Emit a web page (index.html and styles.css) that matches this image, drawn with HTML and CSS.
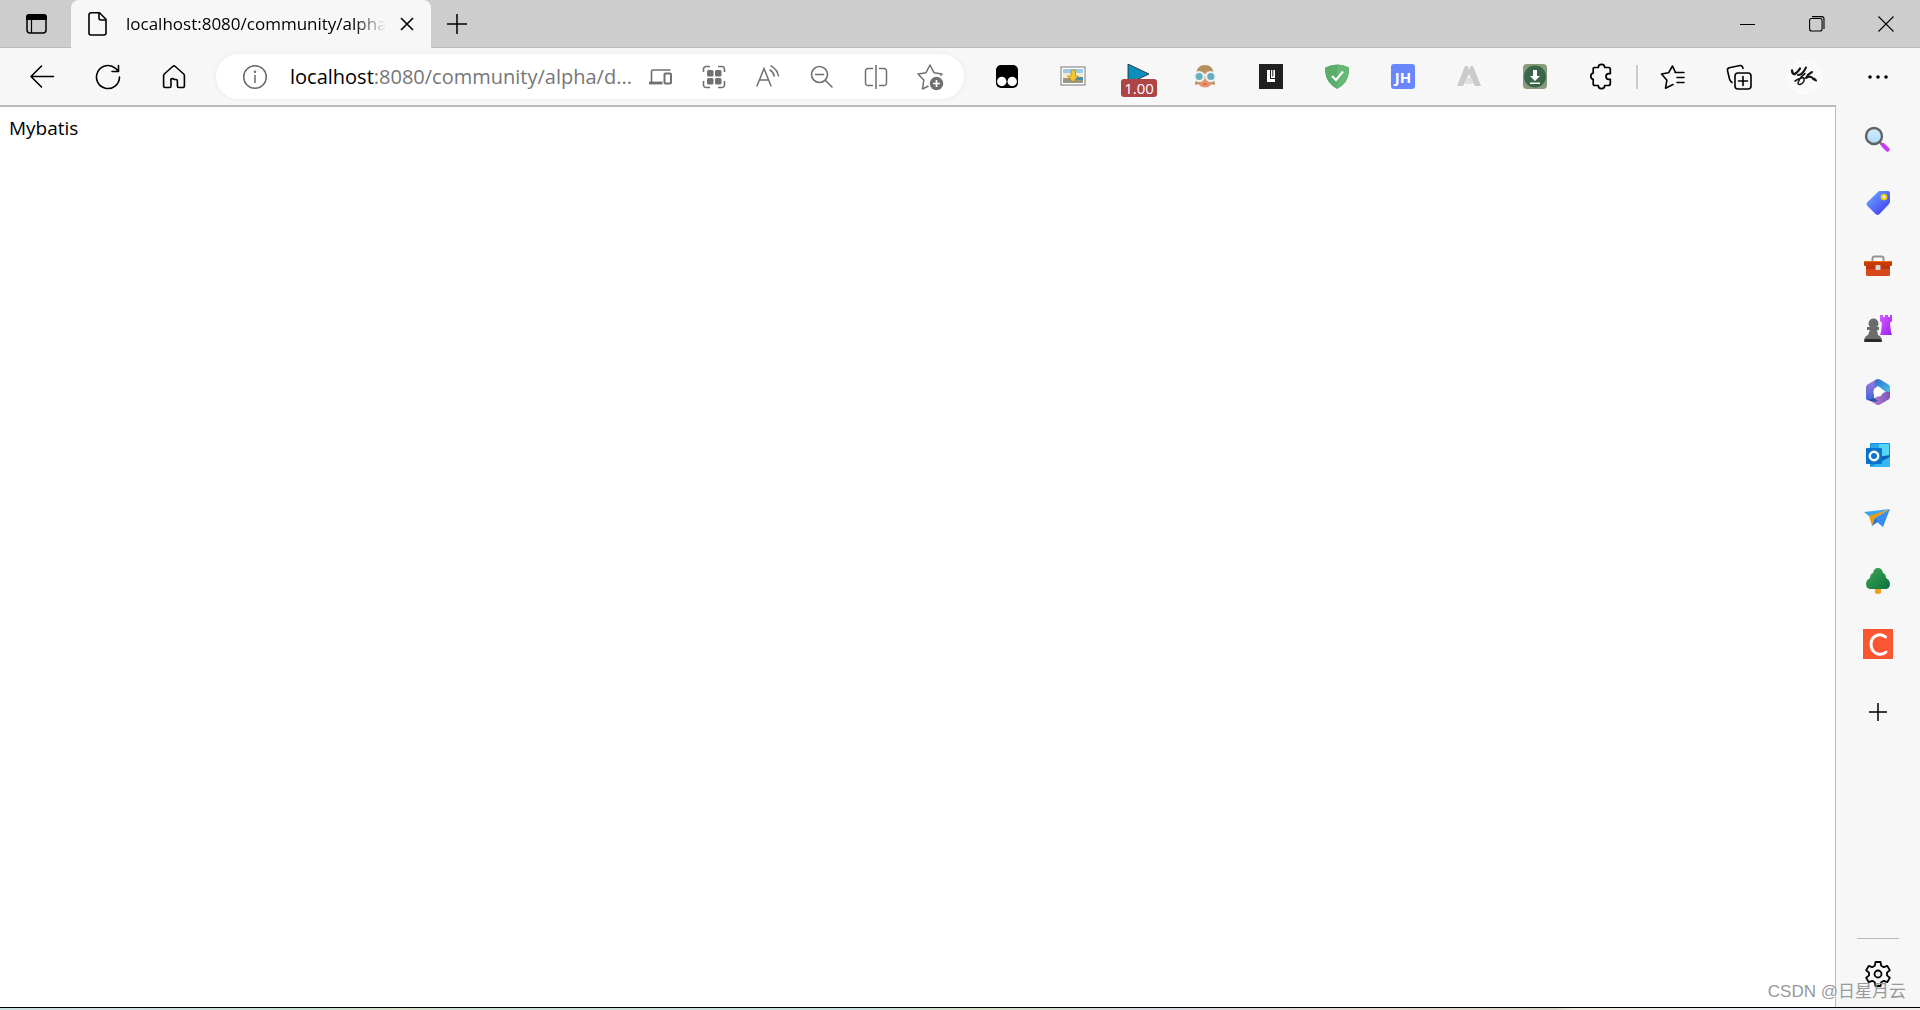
FILE: index.html
```html
<!DOCTYPE html>
<html lang="en">
<head>
<meta charset="utf-8">
<title>localhost:8080/community/alpha</title>
<link rel="stylesheet" href="styles.css">
</head>
<body>
<div class="browser">
  <header class="tabstrip">
    <button class="tab-menu" aria-label="Tab actions"><svg width="24" height="24" viewBox="0 0 24 24"><rect x="3" y="3" width="19" height="18" rx="3" fill="none" stroke="#000" stroke-width="1.5"/><path d="M2 8V5a3 3 0 0 1 3-3h15a3 3 0 0 1 3 3v3z"/><path d="M7.500 8v13" stroke="#000" stroke-width="1.200"/></svg></button>
    <div class="tab">
      <svg width="22" height="26" viewBox="0 0 22 26" fill="none" stroke="#000" stroke-width="1.6" stroke-linejoin="round"><path d="M4 1.800h8.500l6.500 6.500v13.700a2 2 0 0 1-2 2H4a2 2 0 0 1-2-2V3.800a2 2 0 0 1 2-2z"/><path d="M12 2v5a2 2 0 0 0 2 2h5"/></svg>
      <span class="tab-title">localhost:8080/community/alpha</span>
      <button class="tab-close" aria-label="Close tab"><svg width="14" height="14" viewBox="0 0 14 14"><path d="M1 1l12 12M13 1L1 13" stroke="#000" stroke-width="1.600"/></svg></button>
    </div>
    <button class="new-tab" aria-label="New tab"><svg width="22" height="22" viewBox="0 0 22 22"><path d="M11 1v20M1 11h20" stroke="#000" stroke-width="1.500"/></svg></button>
    <div class="window-controls">
      <button aria-label="Minimize"><svg width="16" height="16" viewBox="0 0 16 16"><path d="M0 8.500h15" stroke="#000"/></svg></button>
      <button aria-label="Restore"><svg width="16" height="16" viewBox="0 0 16 16" fill="none" stroke="#000" stroke-width="1.100"><rect x=".6" y="2.500" width="12.500" height="12.500" rx="2"/><path d="M3 .6h9.500a2.500 2.500 0 0 1 2.500 2.500V13"/></svg></button>
      <button aria-label="Close"><svg width="16" height="16" viewBox="0 0 16 16"><path d="M.5.5l15 15M15.500.5l-15 15" stroke="#000" stroke-width="1.100"/></svg></button>
    </div>
  </header>

  <nav class="toolbar">
    <div class="group">
      <button aria-label="Back"><svg width="26" height="26" viewBox="0 0 26 26" fill="none" stroke="#000" stroke-width="1.600" stroke-linecap="round" stroke-linejoin="round"><path d="M24.500 12.500H2M12.500 2L2 12.500 12.500 23"/></svg></button>
      <button aria-label="Refresh"><svg width="26" height="26" viewBox="0 0 26 26" fill="none" stroke="#000" stroke-width="1.600" stroke-linecap="round" stroke-linejoin="round"><path d="M24.500 13A11.500 11.500 0 1 1 20.500 4.300l3 3.200M23.500 1.500v6h-6.500"/></svg></button>
      <button aria-label="Home"><svg width="26" height="26" viewBox="0 0 26 26" fill="none" stroke="#000" stroke-width="1.600" stroke-linejoin="round"><path d="M11.700 2.500a2 2 0 0 1 2.600 0l8.400 7.500a2 2 0 0 1 .7 1.500V22a1.500 1.500 0 0 1-1.500 1.500h-4a1.500 1.500 0 0 1-1.500-1.500v-5a1.500 1.500 0 0 0-1.500-1.500h-2A1.500 1.500 0 0 0 10 17v5a1.500 1.500 0 0 1-1.500 1.500H4.100A1.500 1.500 0 0 1 2.600 22V11.500a2 2 0 0 1 .7-1.500z"/></svg></button>
    </div>
    <div class="address">
      <button class="site-info" aria-label="Site information"><svg width="26" height="26" viewBox="0 0 26 26" fill="none" stroke="#6a6a6a" stroke-width="1.500"><circle cx="13" cy="13" r="11.300"/><path d="M13 11v8"/><circle cx="13" cy="7.800" r=".5"/></svg></button>
      <a class="url" href="#"><span class="host">localhost</span>:8080/community/alpha/d...</a>
      <div class="address-actions">
        <button aria-label="Send to device"><svg width="26" height="26" viewBox="0 0 26 26" fill="none" stroke="#707070" stroke-width="1.600"><path d="M23.500 6H6a1.500 1.500 0 0 0-1.500 1.500V18"/><path d="M2 19h13.500" stroke-width="2.800"/><rect x="17.500" y="9.500" width="6.500" height="10" rx="1" stroke-width="2"/></svg></button>
        <button aria-label="QR code"><svg width="26" height="26" viewBox="0 0 26 26" fill="none" stroke="#707070" stroke-width="1.600"><path d="M2.500 8V5a2.500 2.500 0 0 1 2.500-2.500h4M17 2.500h4A2.500 2.500 0 0 1 23.500 5v3M23.500 17v4a2.500 2.500 0 0 1-2.500 2.500h-4M9 23.500H5A2.500 2.500 0 0 1 2.500 21v-4"/><g fill="#707070" stroke="none"><rect x="6" y="6" width="6.500" height="6.500" rx="1.500"/><rect x="14" y="6" width="6.500" height="6.500" rx="1.500"/><rect x="6" y="14" width="6.500" height="6.500" rx="1.500"/><rect x="14" y="14" width="6.500" height="6.500" rx="1.500"/></g></svg></button>
        <button aria-label="Read aloud"><svg width="26" height="26" viewBox="0 0 26 26" fill="none" stroke="#707070" stroke-width="1.500" stroke-linecap="round"><path d="M2 22L9 4.500 16 22M4.500 16h9M16 1.800q6 3.200 7.500 10M15 6q3.500 2 4.200 6"/></svg></button>
        <button aria-label="Zoom out"><svg width="26" height="26" viewBox="0 0 26 26" fill="none" stroke="#707070" stroke-width="1.600" stroke-linecap="round"><circle cx="10.500" cy="10.500" r="8"/><path d="M16.500 16.500l6.500 6.500M6.500 10.500h8"/></svg></button>
        <button aria-label="Split screen"><svg width="26" height="26" viewBox="0 0 26 26" fill="none" stroke="#707070" stroke-width="1.500"><path d="M10 4.500H5A2.500 2.500 0 0 0 2.500 7v12A2.500 2.500 0 0 0 5 21.500h5M16 4.500h5A2.500 2.500 0 0 1 23.500 7v12a2.500 2.500 0 0 1-2.500 2.500h-5M13 1v24"/></svg></button>
        <button aria-label="Add to favorites"><svg width="28" height="28" viewBox="0 0 28 28" fill="none" stroke="#707070" stroke-width="1.500" stroke-linejoin="round"><path d="M12.500 23L6.500 26l1.300-9L2 11l8-1.300L14 2l4 7.700 8 1.300-1.500 1.800"/><circle cx="20.500" cy="20.500" r="6.700" fill="#707070" stroke="none"/><path d="M20.500 17v7M17 20.500h7" stroke="#fff" stroke-width="1.700"/></svg></button>
      </div>
    </div>
    <div class="group extensions">
      <button aria-label="Tampermonkey"><svg width="24" height="24" viewBox="0 0 24 24"><rect x="1" y="1" width="22" height="23" rx="5"/><circle cx="6.800" cy="17.500" r="4.700" fill="#fff"/><circle cx="17.200" cy="17.500" r="4.700" fill="#fff"/></svg></button>
      <button aria-label="Image downloader"><svg width="26" height="22" viewBox="0 0 26 22"><rect x="1" y="2" width="24" height="18" fill="#fff" stroke="#777"/><path fill="#9cc9ee" d="M3 4h20v9H3z"/><path fill="#f3ecc9" d="M3 8h20v5H3z"/><path fill="#9b9882" d="M3 13h20v5H3z"/><path fill="#4b8bad" d="M14 12h9v3h-9z"/><path fill="#f4c52b" stroke="#a67b1c" stroke-width=".6" d="M11 5h4.500v6h3L13 17l-5.500-6H11z"/></svg></button>
      <button class="speed" aria-label="Playback speed 1.00"><svg width="24" height="24" viewBox="0 0 24 24"><path d="M1 0l21 10L1 20z" fill="#0b8ebc" stroke="#222" stroke-width=".8"/></svg><span class="badge">1.00</span></button>
      <button aria-label="Profile reader"><svg width="24" height="24" viewBox="0 0 24 24"><path d="M2 21q1-5 1-11Q4 1 12 1t9 9q0 6 1 11l-4-1H6z" fill="#b5905f"/><path d="M4 11q8-1 10-5l6 6v5q-2 6.500-8 6.500T4 17z" fill="#e59470"/><g fill="#69aeb8" stroke="#e7f5fa" stroke-width="2"><path d="M0 11h24" /><circle cx="6.200" cy="12.500" r="4.600"/><circle cx="17.800" cy="12.500" r="4.600"/></g><path d="M10 20h4" stroke="#ca4e47"/></svg></button>
      <button aria-label="LeetCode tools"><svg width="24" height="25" viewBox="0 0 24 25"><path fill="#202020" d="M0 0h24v25H0z"/><path fill="#fff" d="M8 6h3v9h5v3H8zM12 6h4v8h-4z"/><path fill="#202020" d="M13.300 6h1v6.500h-1z"/></svg></button>
      <button aria-label="Ad blocker"><svg width="24" height="25" viewBox="0 0 24 25"><path d="M0 3.500Q6 .5 12 .5t12 3Q25 18 12 25-1 18 0 3.500z" fill="#5bad6c"/><path d="M12 .5q6 0 12 3Q25 18 12 25z" fill="#65b875"/><path d="M7 12l4 4 7-8.500" fill="none" stroke="#fff" stroke-width="2"/></svg></button>
      <button class="jh" aria-label="JH extension">JH</button>
      <button aria-label="Mirror extension"><svg width="26" height="22" viewBox="0 0 26 22"><path fill="#cbcbcb" d="M9 1h2.500L13 5l1.500-4H17l8 20h-6L13 9 7 21H1z"/><path fill="#e0e0e0" d="M11 13h4l2.500 6H8.500z"/></svg></button>
      <button aria-label="Downloader"><svg width="24" height="25" viewBox="0 0 24 25"><rect width="24" height="25" rx="4" fill="#869b7a"/><circle cx="12" cy="12.500" r="11" fill="#3b6548"/><path fill="#fff" d="M10 6h4v6h3l-5 5-5-5h3zM7 18.500h10v1.600H7z"/></svg></button>
      <button aria-label="Extensions"><svg width="26" height="28" viewBox="0 0 26 28" fill="none" stroke="#000" stroke-width="1.700" stroke-linejoin="round"><path d="M6.500 5.500h3.800a3.200 3.200 0 0 1 6.400 0h3.800a1.800 1.800 0 0 1 1.800 1.800v4.400h-1.500a2.800 2.800 0 0 0 0 5.600h1.500v4.200a2 2 0 0 1-2 2h-3.600a3.200 3.200 0 0 1-6.400 0H7a1.800 1.800 0 0 1-1.800-1.800v-4.400a3.200 3.200 0 0 1 0-6.200V6.800a1.300 1.300 0 0 1 1.300-1.300z"/></svg></button>
    </div>
    <span class="divider"></span>
    <div class="group">
      <button aria-label="Favorites"><svg width="26" height="26" viewBox="0 0 26 26" fill="none" stroke="#000" stroke-width="1.600" stroke-linecap="round" stroke-linejoin="round"><path d="M15 8.500h9M17 13.500h7M17 18.500h7M13 20.500l-7.500 3.700 1.400-8L1.500 10l7-1.200L12.500 2l3 6.500"/></svg></button>
      <button aria-label="Collections"><svg width="26" height="26" viewBox="0 0 26 26" fill="none" stroke="#000" stroke-width="1.600" stroke-linecap="round"><path d="M6 18.500Q4 17 3.500 15L1.500 6.500A2.500 2.500 0 0 1 3.200 3.700L14 1.500q2.500-.2 3 3"/><rect x="9" y="9" width="16" height="16" rx="3"/><path d="M17 12.500v9M12.500 17h9"/></svg></button>
      <button aria-label="Profile"><svg width="34" height="34" viewBox="0 0 34 34" fill="none" stroke="#151515" stroke-linecap="round" stroke-linejoin="round"><circle cx="17" cy="17" r="16.500" fill="#fafafa" stroke="#fff"/><path d="M4 10.500q.5 4 3 3.500 3-2 5-5.500" stroke-width="2.400"/><path d="M10 15q4 .5 8-7.500" stroke-width="2"/><path d="M7 21q7-4 9-3 1 5-4 6.500-3 0-1.500-3 2-5 6.500-8" stroke-width="1.600"/><path d="M24 12q-4 2-6 6 4-2 6-.5 1 2.500 4 3l-2-2" stroke-width="2"/></svg></button>
    </div>
    <button class="more" aria-label="Settings and more"><svg width="22" height="6" viewBox="0 0 22 6"><circle cx="3" cy="3" r="1.800"/><circle cx="11" cy="3" r="1.800"/><circle cx="19" cy="3" r="1.800"/></svg></button>
  </nav>

  <div class="body">
    <main class="page">Mybatis</main>
    <aside class="sidebar">
      <button aria-label="Search"><svg width="28" height="28" viewBox="0 0 28 28"><defs><linearGradient id="purple" x2="1" y2="1"><stop stop-color="#d75bff"/><stop offset="1" stop-color="#9c20f4"/></linearGradient><linearGradient id="glass" x2="0" y2="1"><stop stop-color="#d6efff"/><stop offset="1" stop-color="#a9d9fb"/></linearGradient></defs><path d="M16 16.500l3 3" stroke="#777" stroke-width="2.500"/><circle cx="10" cy="10" r="8" fill="url(#glass)" stroke="#636363" stroke-width="2.400"/><path d="M19.500 19.500l4 4" stroke="#c63cfa" stroke-width="4.500" stroke-linecap="round"/></svg></button>
      <button aria-label="Shopping"><svg width="28" height="28" viewBox="0 0 28 28"><defs><linearGradient id="tag" x2="1" y2="1"><stop stop-color="#6fb4ff"/><stop offset="1" stop-color="#3c2df0"/></linearGradient></defs><path d="M15 2h9a2 2 0 0 1 2 2v8q0 2-1.500 3.500l-9 9.500q-2 2-4 0l-8-8q-2-2 0-4z" fill="url(#tag)"/><circle cx="20" cy="8" r="2.400" fill="#e4efe0" stroke="#f3c911" stroke-width="1.900"/></svg></button>
      <button aria-label="Tools"><svg width="28" height="28" viewBox="0 0 28 28"><path d="M8.500 10V6.500a2 2 0 0 1 2-2h7a2 2 0 0 1 2 2V10" fill="none" stroke="#949494" stroke-width="2"/><rect x="2" y="12" width="24" height="12" rx="1.500" fill="#d9481a"/><path fill="#bd360d" d="M2 13h24v4H2z"/><rect x="0" y="9" width="28" height="5" rx="1" fill="#c73b04"/><path d="M0 9.500h28" stroke="#ed6810"/><rect x="11.500" y="13" width="5" height="5" rx="1" fill="#d5d5d5"/></svg></button>
      <button aria-label="Games"><svg width="28" height="28" viewBox="0 0 28 28"><path fill="url(#purple)" d="M16 0h3v2h2V0h3v2h2V0h2v6l-2 2 1 9 1 3H16l1-3 1-9-2-2z"/><path fill="#6b6b6b" d="M6 12a5 5 0 1 1 7 0h2v3h-2l1 5q3 1 4 5v2H0v-2q1-4 4-5l2-5H3v-3z"/><path d="M2 25.500h14" stroke="#292929" stroke-width="3" stroke-linecap="round"/></svg></button>
      <button aria-label="Microsoft 365"><svg width="28" height="28" viewBox="0 0 28 28"><defs><linearGradient id="m1" x2="0" y2="1"><stop stop-color="#a577dd"/><stop offset="1" stop-color="#3a6bdc"/></linearGradient><linearGradient id="m2" x2="1" y2="1"><stop stop-color="#2d6bca"/><stop offset="1" stop-color="#4cc8ee"/></linearGradient><linearGradient id="m3" x2="1"><stop stop-color="#c58bdd"/><stop offset="1" stop-color="#7b52b5"/></linearGradient></defs><path fill="url(#m1)" d="M12 1.500L3.500 6.500Q2 7.500 2 9v12q3 3 8 0V11l4-4z"/><path fill="url(#m2)" d="M12 1.500q2-1 4 0l8.500 5Q26 7.500 26 9v7q-2 0-4-2l-8-6-3 2q-1-6 1-8.500z"/><path fill="url(#m3)" d="M26 14v5q0 1.500-1.500 2.500l-8.500 5q-2 1-4 0l-8-5q3 1 6-1l12-7z"/><path fill="#2750a3" d="M3 21q4 1 7-1l4 3q-6 2-11-2z"/><circle cx="14" cy="14" r="4.600" fill="#fff"/></svg></button>
      <button aria-label="Outlook"><svg width="28" height="28" viewBox="0 0 28 28"><rect x="6" y="2" width="20" height="24" rx="1" fill="#1490df"/><path fill="#56d5fa" d="M15 3h10v12H15z"/><path fill="#28a8ea" d="M7 3h8v12H7z"/><path fill="#0b65b0" d="M26 14v12L13 16z"/><path fill="#35b7f1" d="M6 26l20-10v10z"/><rect x="2" y="7" width="16" height="16" rx="1" fill="#0873cd"/><circle cx="10" cy="15" r="4.200" fill="none" stroke="#fff" stroke-width="2.500"/></svg></button>
      <button aria-label="Drop"><svg width="28" height="28" viewBox="0 0 28 28"><path fill="#3ba4f5" d="M0 8l26-3-20 8z"/><path fill="#ec9f0a" d="M5 12L26 5 11 14 8 22z"/><path fill="#3a8bf2" d="M26 5l-7 18-6-5-5 4 3-8z"/><path fill="#1b58c9" d="M11 14l3 4-6 4z" opacity=".55"/></svg></button>
      <button aria-label="Browser essentials"><svg width="28" height="28" viewBox="0 0 28 28"><defs><linearGradient id="leaf" x2="1" y2="1"><stop stop-color="#44a851"/><stop offset="1" stop-color="#077141"/></linearGradient></defs><path fill="#eca31a" d="M11 20h6v6q-3 2-6 0z"/><path fill="url(#leaf)" d="M14 1q4 0 5 5 3 1 3 5 4 2 4 6 0 5-5 5H7q-5 0-5-5 0-4 4-6 0-4 3-5 1-5 5-5z"/></svg></button>
      <button aria-label="C shortcut"><svg width="30" height="30" viewBox="0 0 30 30"><path fill="#fc5531" d="M0 0h30v30H0z"/><path d="M22.500 8Q19 5 15 6q-7 2-7 9 0 8 7 10 5 1 8-2" fill="none" stroke="#fff" stroke-width="3" stroke-linecap="round"/></svg></button>
      <button class="add" aria-label="Add"><svg width="20" height="20" viewBox="0 0 20 20"><path d="M10 1v18M1 10h18" stroke="#000" stroke-width="1.500"/></svg></button>
      <div class="sidebar-foot">
        <button aria-label="Settings"><svg width="28" height="28" viewBox="0 0 28 28" fill="none" stroke="#000" stroke-width="1.800" stroke-linejoin="round"><path d="M11.500 2h5l.7 3.700 2.600 1.500 3.500-1.300 2.500 4.300-2.800 2.400v2.800l2.800 2.400-2.500 4.300-3.500-1.300-2.600 1.500-.7 3.700h-5l-.7-3.700-2.600-1.500-3.500 1.300-2.500-4.300L5 15.400v-2.800l-2.800-2.400 2.500-4.300 3.500 1.300 2.600-1.500z"/><circle cx="14" cy="14" r="3.500"/></svg></button>
      </div>
    </aside>
    <span class="watermark">CSDN @日星月云</span>
  </div>
  <div class="desktop-edge"></div>
</div>
</body>
</html>
```
FILE: styles.css
```css
* { box-sizing: border-box; }

body {
  margin: 0;
  font-family: "Open Sans", "Noto Sans", "Noto Sans CJK SC", sans-serif;
  color: #000;
}

button {
  display: flex;
  align-items: center;
  justify-content: center;
  flex: none;
  padding: 0;
  border: 0;
  background: none;
  font-family: inherit;
}

svg { display: block; flex: none; }

.browser {
  display: flex;
  flex-direction: column;
  min-height: 100vh;
  background: #f7f7f7;
}

.tabstrip {
  display: flex;
  height: 48px;
  background: #cdcdcd;
  box-shadow: inset 0 -1px #bababa;
}

.tab-menu { width: 71px; }

.tab {
  display: flex;
  align-items: center;
  width: 360px;
  padding: 0 16px;
  border-radius: 8px 8px 0 0;
  background: #f7f7f7;
}

.tab-title {
  flex: 1;
  min-width: 0;
  margin: 0 8px 0 17px;
  overflow: hidden;
  white-space: nowrap;
  font-size: 17px;
  line-height: 24px;
  mask-image: linear-gradient(90deg, #000 86%, transparent 98%);
}

.tab-close { width: 16px; height: 24px; }
.new-tab { width: 52px; }

.window-controls { display: flex; margin-left: auto; }
.window-controls button { width: 69px; }

.toolbar {
  display: flex;
  align-items: center;
  height: 57px;
  padding: 0 9px;
}

.group { display: flex; }
.group button { width: 66px; height: 44px; }

.address {
  display: flex;
  align-items: center;
  flex: 1;
  min-width: 0;
  height: 45px;
  margin: 0 10px 0 9px;
  padding: 0 7px 0 12px;
  border-radius: 23px;
  background: #fff;
  box-shadow: 0 0 5px #e8e8e8;
}

.site-info { width: 54px; }

.url {
  flex: 1;
  min-width: 0;
  margin-left: 8px;
  overflow: hidden;
  white-space: nowrap;
  color: #767676;
  font-size: 20px;
  line-height: 28px;
  text-decoration: none;
}

.host { color: #000; }

.address-actions { display: flex; }
.address-actions button { width: 54px; height: 40px; }

.speed { position: relative; }

.badge {
  position: absolute;
  bottom: 1px;
  left: 15px;
  width: 36px;
  border-radius: 3px;
  background: #ad4545;
  color: #fff;
  font-size: 15px;
  line-height: 18px;
  text-align: center;
}

.extensions .jh {
  width: 24px;
  height: 25px;
  margin: 10px 21px;
  border-radius: 3px;
  background: #6887fb;
  color: #fff;
  font-size: 15px;
  font-weight: 700;
}

.divider { width: 2px; height: 24px; margin: 0 2px; background: #ccc; }
.more { width: 66px; height: 44px; margin-left: 7px; }

.body {
  position: relative;
  display: flex;
  flex: 1;
}

.page {
  flex: 1;
  padding: 8px 9px;
  border-top: 2px solid #bbb;
  border-right: 1px solid #bbb;
  background: #fff;
  font-size: 19px;
  line-height: 27px;
}

.sidebar {
  display: flex;
  flex-direction: column;
  align-items: center;
  width: 84px;
  padding-top: 3px;
}

.sidebar button { width: 63px; height: 63px; }
.sidebar .add { height: 73px; }

.sidebar-foot {
  margin-top: auto;
  padding: 3px 0 2px;
  border-top: 1px solid #bbb;
}

.sidebar-foot button { width: 42px; }

.watermark {
  position: absolute;
  right: 14px;
  bottom: 3px;
  color: #999;
  font-family: "Liberation Sans", "Noto Sans CJK SC", sans-serif;
  font-size: 17px;
  line-height: 24px;
}

.desktop-edge {
  height: 3px;
  border-top: 1px solid #000;
  background: linear-gradient(90deg, #c4dfdc, #d0dfe2 5%, #c2e0d2 16%, #d8dfc8 21%, #c8dfd5 24%, #c5e0dc 45%, #d3dfc4 51%, #d5d8e0 60%, #e5d8cf 72%, #d5d5c8 81%, #eeecE0 82%, #e6eaf3 94%, #f0ece8);
}
```
